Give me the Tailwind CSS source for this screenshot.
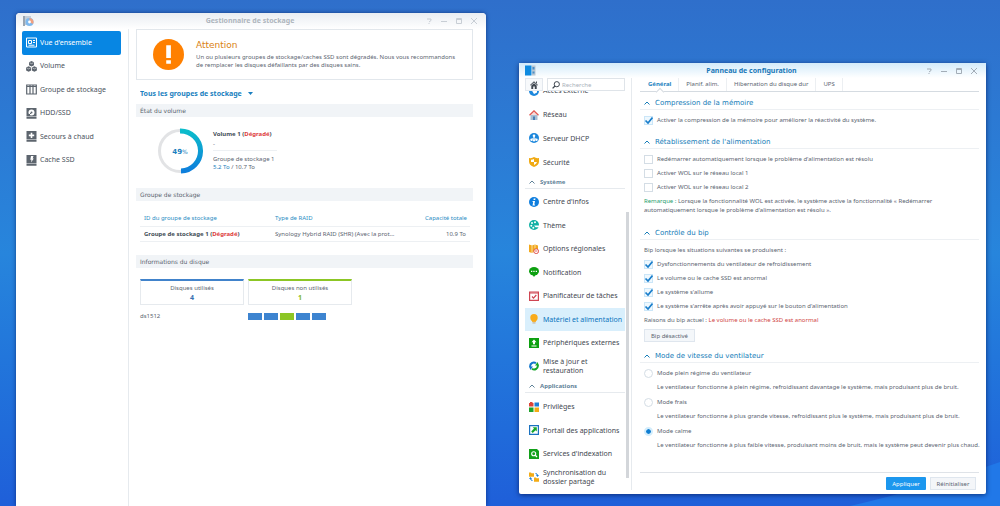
<!DOCTYPE html>
<html lang="fr">
<head>
    <meta charset="UTF-8">
    <meta name="viewport" content="width=device-width, initial-scale=1.0">
    <title>DSM</title>
    <script src="https://cdn.jsdelivr.net/npm/@tailwindcss/browser@4"></script>
</head>
<body class="font-['Noto_Sans','DejaVu_Sans',sans-serif] text-[6px] leading-[10px] text-[#5b6470] bg-linear-to-b from-[#2f6fcb] via-[#2785dc] to-[#1f5fd9]">

    <main class="relative isolate flex items-start h-screen overflow-hidden pl-4 pr-[14px] gap-[33px]">
        <!-- wallpaper swoosh -->
        <svg class="absolute inset-0 -z-10 w-full h-full" viewBox="0 0 1000 506" preserveAspectRatio="none">
            <path d="M850 506 Q920 490 1000 462 V506 Z" fill="#2178e8" />
        </svg>

        <!-- Gestionnaire de stockage -->
        <section class="mt-[13px] flex-[470] min-w-0 self-stretch bg-white rounded-t-sm shadow-[0_0_4px_rgba(0,20,80,0.6)] flex flex-col">
            <header class="h-4 shrink-0 grid grid-cols-[1fr_auto_1fr] items-center pl-[6px] pr-2 rounded-t-sm bg-linear-to-b from-[#e9edf2] to-white text-[#c8ced5]">
                <svg class="w-3 h-3" viewBox="0 0 12 12">
                    <path d="M1 1h2v10H1z" fill="#9aa5b1" /><path d="M3 1h6v9H3z" fill="#c3cdd8" />
                    <circle cx="7.500" cy="7" r="4" fill="#7db8ee" /><path d="M7.500 7V3a4 4 0 0 1 3.500 6z" fill="#f0a080" />
                    <circle cx="7.500" cy="7" r="1.400" fill="#fff" />
                </svg>
                <h1 class="text-[7px] font-bold text-[#aeb5bd]">Gestionnaire de stockage</h1>
                <div class="flex justify-end gap-[7px]">
                    <button aria-label="Aide"><svg class="w-2 h-2" viewBox="0 0 8 8" fill="none" stroke="currentColor"><path d="M2 2h4v1.500L4 5M4 6v1" /></svg></button>
                    <button aria-label="Réduire"><svg class="w-2 h-2" viewBox="0 0 8 8" fill="none" stroke="currentColor"><path d="M1 4.500h6" /></svg></button>
                    <button aria-label="Agrandir"><svg class="w-2 h-2" viewBox="0 0 8 8" fill="none" stroke="currentColor"><path d="M1.500 1.500h5v5h-5zM1.500 2.500h5" /></svg></button>
                    <button aria-label="Fermer"><svg class="w-2 h-2" viewBox="0 0 8 8" fill="none" stroke="currentColor"><path d="M1 1l6 6M7 1L1 7" /></svg></button>
                </div>
            </header>

            <div class="flex-1 flex min-h-0">
                <nav class="w-[113px] shrink-0 pl-[6px] pr-[7px] pt-[2px] border-r border-[#e6eaee]">
                    <div class="grid auto-rows-fr h-[141px] text-[7px] text-[#4a525c]">
                        <a href="#" class="flex items-center gap-[3px] pl-1 rounded-xs bg-[#0786e3] text-white">
                            <svg class="w-[11px] h-[11px]" viewBox="0 0 11 11" fill="none" stroke="currentColor"><path d="M.5 1h10v9H.5z" /><path d="M2.500 3.500h3v3h-3zM7 3.500h2M7 5.500h2M2.500 8.200h6" /></svg>
                            Vue d'ensemble
                        </a>
                        <a href="#" class="flex items-center gap-[3px] pl-1">
                            <svg class="w-[11px] h-[11px] text-[#5d656e]" viewBox="0 0 11 11" fill="currentColor"><path d="M5.500 0l2.500 1.300v3L5.500 5.500 3 4.300v-3zM2.600 5.200l2.500 1.300v3L2.600 10.800.1 9.500v-3zM8.400 5.200l2.500 1.300v3l-2.500 1.300-2.500-1.300v-3z" /><path d="M3.500 1.700l2 1 2-1M.7 6.900l1.900 1 2-1M6.500 6.900l1.900 1 2-1" stroke="#fff" stroke-width=".5" fill="none" /></svg>
                            Volume
                        </a>
                        <a href="#" class="flex items-center gap-[3px] pl-1">
                            <svg class="w-[11px] h-[11px] text-[#5d656e]" viewBox="0 0 11 11" fill="none" stroke="currentColor"><path d="M.7 1h9.600v9H.7zM4 1v9M7 1v9" stroke-width="1.200" /><path d="M1 2.500h9" /></svg>
                            Groupe de stockage
                        </a>
                        <a href="#" class="flex items-center gap-[3px] pl-1">
                            <svg class="w-[11px] h-[11px] text-[#5d656e]" viewBox="0 0 11 11"><path d="M.5 0h10v8.500H.5zM.5 9h10v1.700H.5z" fill="currentColor" /><circle cx="5.500" cy="4.400" r="3" fill="#fff" /><path d="M5.500 4.500L3 7" stroke="currentColor" /><circle cx="5.500" cy="4.400" r="1" fill="currentColor" /></svg>
                            HDD/SSD
                        </a>
                        <a href="#" class="flex items-center gap-[3px] pl-1">
                            <svg class="w-[11px] h-[11px] text-[#5d656e]" viewBox="0 0 11 11"><path d="M.5 0h10v8.500H.5zM.5 9h10v1.700H.5z" fill="currentColor" /><path d="M5.500 1.700v5.400M2.800 4.400h5.400" stroke="#fff" stroke-width="1.600" /></svg>
                            Secours à chaud
                        </a>
                        <a href="#" class="flex items-center gap-[3px] pl-1">
                            <svg class="w-[11px] h-[11px] text-[#5d656e]" viewBox="0 0 11 11"><path d="M.5 0h10v8.500H.5zM.5 9h10v1.700H.5z" fill="currentColor" /><path d="M5 1h2.500L6.700 3.500h1.100L5 7.500l.5-2.800H4.300z" fill="#fff" /></svg>
                            Cache SSD
                        </a>
                    </div>
                </nav>

                <div class="flex-1 min-w-0 pl-[7px] pr-[13px]">
                    <div class="h-[51px] flex items-center border border-[#e2e7ec] pl-4">
                        <svg class="w-[31px] h-[31px] shrink-0" viewBox="0 0 30 30"><circle cx="15" cy="15" r="15" fill="#ff8000" /><path d="M12.800 6h4.500v12.500h-4.500zM12.800 20.500h4.500v3.500h-4.500z" fill="#fff" /></svg>
                        <div class="pl-3 pb-1">
                            <h2 class="font-['DejaVu_Sans',sans-serif] text-[9px] leading-4 text-[#d98213]">Attention</h2>
                            <p class="leading-[8px]">Un ou plusieurs groupes de stockage/caches SSD sont dégradés. Nous vous recommandons<br>de remplacer les disques défaillants par des disques sains.</p>
                        </div>
                    </div>

                    <div class="h-6 pt-[3px] pl-1 flex items-center gap-[6px] text-[#1a7fc0]">
                        <select aria-label="Groupe de stockage" class="appearance-none text-[7px] font-bold leading-[10px]">
                            <option>Tous les groupes de stockage</option>
                        </select>
                        <svg class="w-[5px] h-[3px]" viewBox="0 0 5 3" fill="currentColor"><path d="M0 0h5L2.500 3z" /></svg>
                    </div>

                    <h3 class="h-[13px] pl-1 flex items-center bg-[#f1f4f7] font-['DejaVu_Sans',sans-serif]">État du volume</h3>
                    <div class="h-[71px] pl-[21px] flex items-center gap-[10px] pb-1">
                        <svg class="w-[46px] h-[46px]" viewBox="0 0 46 46" fill="none">
                            <defs><linearGradient id="arc" x1="0" y1="0" x2="0" y2="1"><stop stop-color="#0cbccb" /><stop offset="1" stop-color="#0e7fdc" /></linearGradient></defs>
                            <circle cx="23" cy="23" r="20.500" stroke="#e2e3e5" stroke-width="3" />
                            <path d="M23 3a20 20 0 0 1 1 40" stroke="url(#arc)" stroke-width="5" />
                            <text x="23" y="26" text-anchor="middle" class="font-['DejaVu_Sans',sans-serif]" font-size="7" font-weight="bold" fill="#1a7fc0">49<tspan font-size="6" font-weight="normal">%</tspan></text>
                        </svg>
                        <div class="w-[64px] whitespace-nowrap leading-[8px]">
                            <p class="pb-[2px] font-bold text-[#414b55]">Volume 1 (<span class="text-[#dd3c3c]">Dégradé</span>)</p>
                            <p class="pb-[2px] mb-1 border-b border-[#edf0f3]">-</p>
                            <p>Groupe de stockage 1</p>
                            <p><span class="text-[#1a7fc0]">5.2 To</span> / 10.7 To</p>
                        </div>
                    </div>

                    <h3 class="h-[13px] pl-1 flex items-center bg-[#f1f4f7] font-['DejaVu_Sans',sans-serif]">Groupe de stockage</h3>
                    <div class="h-[54px] pt-[10px] pl-1 pr-[3px]">
                        <table class="w-full">
                            <thead>
                                <tr class="h-[15px] text-[#2a8cc4] border-b border-[#edf0f3]">
                                    <th class="w-[131px] pl-1 text-left font-normal">ID du groupe de stockage</th>
                                    <th class="pl-1 text-left font-normal">Type de RAID</th>
                                    <th class="pr-[3px] text-right font-normal">Capacité totale</th>
                                </tr>
                            </thead>
                            <tbody>
                                <tr class="h-[15px] border-b border-[#edf0f3]">
                                    <td class="pl-1 font-bold text-[#414b55]">Groupe de stockage 1 (<span class="text-[#dd3c3c]">Dégradé</span>)</td>
                                    <td class="pl-1">Synology Hybrid RAID (SHR) (Avec la prot...</td>
                                    <td class="pr-[4px] text-right">10.9 To</td>
                                </tr>
                            </tbody>
                        </table>
                    </div>

                    <h3 class="h-[13px] pl-1 flex items-center bg-[#f1f4f7] font-['DejaVu_Sans',sans-serif]">Informations du disque</h3>
                    <div class="pt-[11px] pl-1 grid grid-cols-[104px_104px] gap-x-1 gap-y-[6px]">
                        <div class="h-[26px] pt-[2px] border border-[#e6eaee] border-t-2 border-t-[#4183cb] text-center">
                            <p>Disques utilisés</p>
                            <p class="text-[7px] font-bold leading-[9px] text-[#3a70b0]">4</p>
                        </div>
                        <div class="h-[26px] pt-[2px] border border-[#e6eaee] border-t-2 border-t-[#8cc625] text-center">
                            <p>Disques non utilisés</p>
                            <p class="text-[7px] font-bold leading-[9px] text-[#86b92c]">1</p>
                        </div>
                        <p>ds1512</p>
                        <div class="flex items-center gap-[2px]">
                            <span class="w-[14px] h-[7px] bg-[#3d84d0]"></span>
                            <span class="w-[14px] h-[7px] bg-[#3d84d0]"></span>
                            <span class="w-[14px] h-[7px] bg-[#8cc625]"></span>
                            <span class="w-[14px] h-[7px] bg-[#3d84d0]"></span>
                            <span class="w-[14px] h-[7px] bg-[#3d84d0]"></span>
                        </div>
                    </div>
                </div>
            </div>
        </section>

        <!-- Panneau de configuration -->
        <section class="mt-[63px] flex-[467] min-w-0 bg-white rounded-xs shadow-[0_1px_5px_rgba(0,20,80,0.7)]">
            <header class="h-[15px] grid grid-cols-[1fr_auto_1fr] items-center pl-[6px] pr-2 bg-linear-to-b from-[#d3ebfa] to-white text-[#a3adb7]">
                <svg class="w-[11px] h-[11px]" viewBox="0 0 11 11"><path d="M0 .5h6.500v10H0z" fill="#0f8be0" /><path d="M7 .5h3.500v10H7z" fill="#b9c6d2" /><path d="M7.500 2h2v2.500h-2zM7.500 6.500h2v2h-2z" fill="#4a8fc8" /></svg>
                <h1 class="text-[7px] font-bold text-[#1a78b8]">Panneau de configuration</h1>
                <div class="flex justify-end gap-[7px]">
                    <button aria-label="Aide"><svg class="w-2 h-2" viewBox="0 0 8 8" fill="none" stroke="currentColor"><path d="M2 2h4v1.500L4 5M4 6v1" /></svg></button>
                    <button aria-label="Réduire"><svg class="w-2 h-2" viewBox="0 0 8 8" fill="none" stroke="currentColor"><path d="M1 4.500h6" /></svg></button>
                    <button aria-label="Agrandir"><svg class="w-2 h-2" viewBox="0 0 8 8" fill="none" stroke="currentColor"><path d="M1.500 1.500h5v5h-5zM1.500 2.500h5" /></svg></button>
                    <button aria-label="Fermer"><svg class="w-2 h-2" viewBox="0 0 8 8" fill="none" stroke="currentColor"><path d="M1 1l6 6M7 1L1 7" /></svg></button>
                </div>
            </header>

            <div class="flex pb-1">
                <div class="w-[113px] shrink-0 border-r border-[#e6eaee]">
                    <div class="flex gap-1 pl-[6px] pr-[6px]">
                        <button aria-label="Accueil" class="w-[18px] h-[13px] flex items-center justify-center border border-[#e3e8ee] bg-[#f7f9fb]">
                            <svg class="w-2 h-2" viewBox="0 0 8 8" fill="#3f4750"><path d="M4 .3L8 4l-.6.6L4 1.600.6 4.600 0 4zM1.300 4.600L4 2.300l2.700 2.300V8H4.800V5.500H3.200V8H1.300zM6 .6h1v2L6 1.700z" /></svg>
                        </button>
                        <label class="flex-1 min-w-0 h-[13px] flex items-center gap-[2px] pl-1 border border-[#dfe4e9]">
                            <svg class="w-2 h-2 shrink-0" viewBox="0 0 8 8" fill="none" stroke="#3f4750"><circle cx="4.800" cy="3.200" r="2.600" /><path d="M3 5L.6 7.400" stroke-width="1.300" /></svg>
                            <input type="text" aria-label="Recherche" placeholder="Recherche" class="min-w-0 w-full outline-none placeholder:text-[#a9b1ba]">
                        </label>
                    </div>

                    <div class="flex justify-between h-[399px] pl-[6px] pr-[2px] overflow-hidden">
                        <nav class="w-[100px] -mt-3 text-[7px] leading-[9px] text-[#3f4750]">
                            <div class="grid auto-rows-fr h-[95px]">
                                <a href="#" class="flex items-center gap-1 pl-1 whitespace-nowrap">
                                    <svg class="w-[10px] h-[10px] shrink-0" viewBox="0 0 10 10"><circle cx="5" cy="5" r="5" fill="#1c87dc" /><path d="M2 3l3 2 3-2v3.500L5 8z" fill="#fff" /></svg>
                                    Accès externe
                                </a>
                                <a href="#" class="flex items-center gap-1 pl-1 whitespace-nowrap">
                                    <svg class="w-[10px] h-[10px] shrink-0" viewBox="0 0 10 10"><path d="M1.500 5h7v5h-7z" fill="#a9bfd4" /><path d="M5 1l4 4H1z" fill="#f6dcdc" /><path d="M.5 5.200L5 .8l4.500 4.400" fill="none" stroke="#e2554f" stroke-width="1.200" /><path d="M4 6.500h2V10H4z" fill="#4c7fb5" /></svg>
                                    Réseau
                                </a>
                                <a href="#" class="flex items-center gap-1 pl-1 whitespace-nowrap">
                                    <svg class="w-[10px] h-[10px] shrink-0" viewBox="0 0 10 10"><circle cx="5" cy="5" r="5" fill="#1c87dc" /><path d="M5 3v2M5 4.800L2.600 6.600M5 4.800l2.400 1.800" stroke="#fff" /><circle cx="5" cy="2.700" r="1.300" fill="#fff" /><circle cx="2.500" cy="6.700" r="1.200" fill="#fff" /><circle cx="5" cy="7.200" r="1.200" fill="#fff" /><circle cx="7.500" cy="6.700" r="1.200" fill="#fff" /></svg>
                                    Serveur DHCP
                                </a>
                                <a href="#" class="flex items-center gap-1 pl-1 whitespace-nowrap">
                                    <svg class="w-[10px] h-[10px] shrink-0" viewBox="0 0 10 10"><path d="M0 1q3 .5 5-1 2 1.500 5 1v3.500Q10 8 5 10 0 8 0 4.500z" fill="#f0aa14" /><path d="M5 2v3H2V2.700Q4 2.700 5 2zM5 5h3Q7.500 7 5 8z" fill="#fff" /></svg>
                                    Sécurité
                                </a>
                            </div>
                            <h2 class="h-[15px] pt-[2px] mb-px flex items-center gap-[5px] pl-1 border-b border-[#e6eaee] text-[6px] font-bold text-[#5f8298]">
                                <svg class="w-[6px] h-[4px]" viewBox="0 0 6 4" fill="none" stroke="currentColor"><path d="M.5 3.500L3 1l2.500 2.500" /></svg>
                                Système
                            </h2>
                            <div class="grid auto-rows-fr h-[188px]">
                                <a href="#" class="flex items-center gap-1 pl-1 whitespace-nowrap">
                                    <svg class="w-[10px] h-[10px] shrink-0" viewBox="0 0 10 10"><circle cx="5" cy="5" r="5" fill="#0f7ede" /><path d="M4.700 1.500h1.800L6.200 3H4.500zM3.700 4H6l-.7 3.500h.8l-.2 1H3.500L4.200 5h-.7z" fill="#fff" /></svg>
                                    Centre d'infos
                                </a>
                                <a href="#" class="flex items-center gap-1 pl-1 whitespace-nowrap">
                                    <svg class="w-[10px] h-[10px] shrink-0" viewBox="0 0 10 10"><circle cx="5" cy="5" r="5" fill="#10b0a4" /><g fill="#fff"><circle cx="3" cy="3" r="1" /><circle cx="6" cy="2.200" r="1" /><circle cx="2.300" cy="5.800" r="1" /><circle cx="4.300" cy="7.800" r="1" /><path d="M5 5.500h5v1.700H6.500z" /></g></svg>
                                    Thème
                                </a>
                                <a href="#" class="flex items-center gap-1 pl-1 whitespace-nowrap">
                                    <svg class="w-[10px] h-[10px] shrink-0" viewBox="0 0 10 10"><path d="M0 .5l3 1 3-1 3 1v7L6 7.500l-3 1.500-3-1z" fill="#f2a91c" /><path d="M3 1.500V9M6 .5v4" stroke="#fff" stroke-width=".6" /><circle cx="7.200" cy="7.200" r="2.400" fill="#fff" stroke="#dd4a44" stroke-width=".9" /><path d="M6 7h2.400" stroke="#dd4a44" stroke-width=".8" /></svg>
                                    Options régionales
                                </a>
                                <a href="#" class="flex items-center gap-1 pl-1 whitespace-nowrap">
                                    <svg class="w-[10px] h-[10px] shrink-0" viewBox="0 0 10 10"><ellipse cx="5" cy="4.300" rx="5" ry="4.200" fill="#0da010" /><path d="M3 7h4l-2 3z" fill="#0da010" /><path d="M2 3.800h1.300v1.300H2zM4.300 3.800h1.300v1.300H4.300zM6.700 3.800H8v1.300H6.700z" fill="#fff" /></svg>
                                    Notification
                                </a>
                                <a href="#" class="flex items-center gap-1 pl-1 whitespace-nowrap">
                                    <svg class="w-[10px] h-[10px] shrink-0" viewBox="0 0 10 10" fill="none"><path d="M.6 1h8.800v8.400H.6z" stroke="#cf4552" stroke-width="1.200" /><path d="M.5 2h9" stroke="#cf4552" /><path d="M3 5.500l1.500 1.700L7.300 4" stroke="#cf4552" stroke-width="1.200" /></svg>
                                    Planificateur de tâches
                                </a>
                                <a href="#" class="flex items-center gap-1 pl-1 whitespace-nowrap bg-[#d9effc] text-[#0a74bd]">
                                    <svg class="w-[10px] h-[10px] shrink-0" viewBox="0 0 10 10"><circle cx="5" cy="3.700" r="3.700" fill="#f9ab1b" /><path d="M3 6h4v1.800H3z" fill="#f9ab1b" /><path d="M3.500 8h3v1.700h-3z" fill="#c9c3b4" /></svg>
                                    Matériel et alimentation
                                </a>
                                <a href="#" class="flex items-center gap-1 pl-1 whitespace-nowrap">
                                    <svg class="w-[10px] h-[10px] shrink-0" viewBox="0 0 10 10"><path d="M0 0h10v10H0z" fill="#0da010" /><path d="M5 1.500l2.500 2.800H6v2H4v-2H2.500zM2.500 7.500h5v1h-5z" fill="#fff" /></svg>
                                    Périphériques externes
                                </a>
                                <a href="#" class="flex items-center gap-1 pl-1">
                                    <svg class="w-[10px] h-[10px] shrink-0" viewBox="0 0 10 10" fill="none" stroke-width="2"><path d="M1.300 6A3.600 3.600 0 0 1 7 2.300" stroke="#1478cc" /><path d="M8.700 4A3.600 3.600 0 0 1 3 7.700" stroke="#14a52a" /><path d="M6 4.500h4L8.500 1z" fill="#14a52a" /><path d="M0 5.500h4L1.500 9z" fill="#1478cc" /></svg>
                                    <span>Mise à jour et<br>restauration</span>
                                </a>
                            </div>
                            <h2 class="h-[15px] pt-[2px] mb-[2px] flex items-center gap-[5px] pl-1 border-b border-[#e6eaee] text-[6px] font-bold text-[#5f8298]">
                                <svg class="w-[6px] h-[4px]" viewBox="0 0 6 4" fill="none" stroke="currentColor"><path d="M.5 3.500L3 1l2.500 2.500" /></svg>
                                Applications
                            </h2>
                            <div class="grid auto-rows-fr h-[94px]">
                                <a href="#" class="flex items-center gap-1 pl-1 whitespace-nowrap">
                                    <svg class="w-[10px] h-[10px] shrink-0" viewBox="0 0 10 10"><path d="M0 1h4.500v3.500H0z" fill="#dd4438" /><path d="M1 0h2.500v1H1z" fill="#dd4438" /><path d="M5.500 .5H10v4H5.500z" fill="#1f7fd6" /><path d="M0 5.500h4.500V10H0z" fill="#1ea32b" /><path d="M5.500 5.500H10V10H5.500z" fill="#f3ac16" /></svg>
                                    Privilèges
                                </a>
                                <a href="#" class="flex items-center gap-1 pl-1 whitespace-nowrap">
                                    <svg class="w-[10px] h-[10px] shrink-0" viewBox="0 0 10 10"><path d="M.6 .6h8.800v8.800H.6z" fill="#fff" stroke="#1b72c0" stroke-width="1.200" /><path d="M3.700 2.300h4.100v4.100L6.600 5.200 3.700 8 2.200 6.500 5 3.600z" fill="#14a52a" /></svg>
                                    Portail des applications
                                </a>
                                <a href="#" class="flex items-center gap-1 pl-1 whitespace-nowrap">
                                    <svg class="w-[10px] h-[10px] shrink-0" viewBox="0 0 10 10"><path d="M0 0h8l2 2v8H0z" fill="#12a01a" /><circle cx="4.700" cy="4.700" r="2" fill="none" stroke="#fff" stroke-width="1.100" /><path d="M6 6l2 2" stroke="#fff" stroke-width="1.300" /></svg>
                                    Services d'indexation
                                </a>
                                <a href="#" class="flex items-center gap-1 pl-1">
                                    <svg class="w-[10px] h-[10px] shrink-0" viewBox="0 0 10 10" fill="none"><path d="M0 .5h2l.5.7H5v3.500H0zM5 5.500h2l.5.700H10V9.700H5z" fill="#f3ac16" /><path d="M6.500 1.500q2 0 2 2M3.500 8.500q-2 0-2-2" stroke="#1f7fd6" /><path d="M7 3h3L8.500 5zM0 7h3L1.500 5z" fill="#1f7fd6" /></svg>
                                    <span>Synchronisation du<br>dossier partagé</span>
                                </a>
                            </div>
                        </nav>
                        <div class="w-[3px] h-[266px] mt-[121px] bg-[#d3d6da]"></div>
                    </div>
                </div>

                <div class="flex-1 min-w-0 flex flex-col pl-2 pr-[7px]">
                    <div class="flex h-[14px] pl-px border-b border-[#d5dbe1] leading-[13px]">
                        <button class="relative px-[7px] font-bold text-[#1a7fc0]">Général
                            <span class="absolute left-1/2 -bottom-[4px] -ml-[3px] w-[6px] h-[6px] rotate-45 bg-white border-t border-l border-[#d5dbe1]"></span>
                        </button>
                        <button class="px-[7px] border-l border-[#eceff2]">Planif. alim.</button>
                        <button class="px-[7px] border-l border-[#eceff2]">Hibernation du disque dur</button>
                        <button class="px-[7px] border-x border-[#eceff2]">UPS</button>
                    </div>

                    <form class="flex-1 flex flex-col">
                        <h2 class="mt-[5px] h-[13px] flex items-center gap-[5px] pl-1 border-b border-[#edf0f3] font-['DejaVu_Sans',sans-serif] text-[7px] text-[#147cb8]">
                            <svg class="w-[6px] h-[4px]" viewBox="0 0 6 4" fill="none" stroke="currentColor"><path d="M.5 3.500L3 1l2.500 2.500" /></svg>
                            Compression de la mémoire
                        </h2>
                        <div class="pt-[3px] pl-1">
                            <label class="h-[14px] flex items-center gap-1">
                                <span class="relative w-[9px] h-[9px]"><input type="checkbox" checked class="peer appearance-none block w-full h-full border border-[#d4dde5] checked:border-[#cbe6f8] checked:bg-[#eef8fe]"><svg class="hidden peer-checked:block absolute inset-0 w-full h-full" viewBox="0 0 9 9" fill="none" stroke="#1a7ecb" stroke-width="1.700"><path d="M1.500 4.500L4 7l4.500-5.500" /></svg></span>
                                Activer la compression de la mémoire pour améliorer la réactivité du système.
                            </label>
                        </div>

                        <h2 class="mt-[9px] h-[13px] flex items-center gap-[5px] pl-1 border-b border-[#edf0f3] font-['DejaVu_Sans',sans-serif] text-[7px] text-[#147cb8]">
                            <svg class="w-[6px] h-[4px]" viewBox="0 0 6 4" fill="none" stroke="currentColor"><path d="M.5 3.500L3 1l2.500 2.500" /></svg>
                            Rétablissement de l'alimentation
                        </h2>
                        <div class="pt-[3px] pl-1">
                            <label class="h-[14px] flex items-center gap-1">
                                <input type="checkbox" class="appearance-none w-[9px] h-[9px] border border-[#d4dde5]">
                                Redémarrer automatiquement lorsque le problème d'alimentation est résolu
                            </label>
                            <label class="h-[14px] flex items-center gap-1">
                                <input type="checkbox" class="appearance-none w-[9px] h-[9px] border border-[#d4dde5]">
                                Activer WOL sur le réseau local 1
                            </label>
                            <label class="h-[14px] flex items-center gap-1">
                                <input type="checkbox" class="appearance-none w-[9px] h-[9px] border border-[#d4dde5]">
                                Activer WOL sur le réseau local 2
                            </label>
                        </div>
                        <p class="pt-[3px] pl-1 leading-[9px]"><span class="text-[#1f9e6e]">Remarque :</span> Lorsque la fonctionnalité WOL est activée, le système active la fonctionnalité « Redémarrer<br>automatiquement lorsque le problème d'alimentation est résolu ».</p>

                        <h2 class="mt-[12px] h-[13px] flex items-center gap-[5px] pl-1 border-b border-[#edf0f3] font-['DejaVu_Sans',sans-serif] text-[7px] text-[#147cb8]">
                            <svg class="w-[6px] h-[4px]" viewBox="0 0 6 4" fill="none" stroke="currentColor"><path d="M.5 3.500L3 1l2.500 2.500" /></svg>
                            Contrôle du bip
                        </h2>
                        <div class="pt-[3px] pl-1">
                            <p class="leading-[14px]">Bip lorsque les situations suivantes se produisent :</p>
                            <label class="h-[14px] flex items-center gap-1">
                                <span class="relative w-[9px] h-[9px]"><input type="checkbox" checked class="peer appearance-none block w-full h-full border border-[#d4dde5] checked:border-[#cbe6f8] checked:bg-[#eef8fe]"><svg class="hidden peer-checked:block absolute inset-0 w-full h-full" viewBox="0 0 9 9" fill="none" stroke="#1a7ecb" stroke-width="1.700"><path d="M1.500 4.500L4 7l4.500-5.500" /></svg></span>
                                Dysfonctionnements du ventilateur de refroidissement
                            </label>
                            <label class="h-[14px] flex items-center gap-1">
                                <span class="relative w-[9px] h-[9px]"><input type="checkbox" checked class="peer appearance-none block w-full h-full border border-[#d4dde5] checked:border-[#cbe6f8] checked:bg-[#eef8fe]"><svg class="hidden peer-checked:block absolute inset-0 w-full h-full" viewBox="0 0 9 9" fill="none" stroke="#1a7ecb" stroke-width="1.700"><path d="M1.500 4.500L4 7l4.500-5.500" /></svg></span>
                                Le volume ou le cache SSD est anormal
                            </label>
                            <label class="h-[14px] flex items-center gap-1">
                                <span class="relative w-[9px] h-[9px]"><input type="checkbox" checked class="peer appearance-none block w-full h-full border border-[#d4dde5] checked:border-[#cbe6f8] checked:bg-[#eef8fe]"><svg class="hidden peer-checked:block absolute inset-0 w-full h-full" viewBox="0 0 9 9" fill="none" stroke="#1a7ecb" stroke-width="1.700"><path d="M1.500 4.500L4 7l4.500-5.500" /></svg></span>
                                Le système s'allume
                            </label>
                            <label class="h-[14px] flex items-center gap-1">
                                <span class="relative w-[9px] h-[9px]"><input type="checkbox" checked class="peer appearance-none block w-full h-full border border-[#d4dde5] checked:border-[#cbe6f8] checked:bg-[#eef8fe]"><svg class="hidden peer-checked:block absolute inset-0 w-full h-full" viewBox="0 0 9 9" fill="none" stroke="#1a7ecb" stroke-width="1.700"><path d="M1.500 4.500L4 7l4.500-5.500" /></svg></span>
                                Le système s'arrête après avoir appuyé sur le bouton d'alimentation
                            </label>
                            <p class="leading-[14px]">Raisons du bip actuel : <span class="text-[#d04545]">Le volume ou le cache SSD est anormal</span></p>
                            <button type="button" class="mt-[2px] w-[51px] h-[13px] block border border-[#dfe6ee] bg-[#f4f7fa]">Bip désactivé</button>
                        </div>

                        <h2 class="mt-2 h-[13px] flex items-center gap-[5px] pl-1 border-b border-[#edf0f3] font-['DejaVu_Sans',sans-serif] text-[7px] text-[#147cb8]">
                            <svg class="w-[6px] h-[4px]" viewBox="0 0 6 4" fill="none" stroke="currentColor"><path d="M.5 3.500L3 1l2.500 2.500" /></svg>
                            Mode de vitesse du ventilateur
                        </h2>
                        <div class="pt-[3px] pl-1 whitespace-nowrap">
                            <label class="h-[14px] flex items-center gap-1">
                                <input type="radio" name="fan" class="appearance-none w-[9px] h-[9px] rounded-full border border-[#d4dde5]">
                                Mode plein régime du ventilateur
                            </label>
                            <p class="pl-[13px] leading-[15px]">Le ventilateur fonctionne à plein régime, refroidissant davantage le système, mais produisant plus de bruit.</p>
                            <label class="h-[14px] flex items-center gap-1">
                                <input type="radio" name="fan" class="appearance-none w-[9px] h-[9px] rounded-full border border-[#d4dde5]">
                                Mode frais
                            </label>
                            <p class="pl-[13px] leading-[15px]">Le ventilateur fonctionne à plus grande vitesse, refroidissant plus le système, mais produisant plus de bruit.</p>
                            <label class="h-[14px] flex items-center gap-1">
                                <input type="radio" name="fan" checked class="appearance-none w-[9px] h-[9px] rounded-full border-2 border-[#d3edfc] bg-[#0f7ed2] bg-clip-padding">
                                Mode calme
                            </label>
                            <p class="pl-[13px] leading-[15px]">Le ventilateur fonctionne à plus faible vitesse, produisant moins de bruit, mais le système peut devenir plus chaud.</p>
                        </div>

                        <div class="mt-auto pt-1 pr-[3px] flex justify-end gap-1 border-t border-[#dfe3e8]">
                            <button type="submit" class="w-10 h-[13px] rounded-[1px] bg-[#1c97ee] text-white">Appliquer</button>
                            <button type="reset" class="w-[46px] h-[13px] border border-[#dfe6ee] bg-[#f4f6f9]">Réinitialiser</button>
                        </div>
                    </form>
                </div>
            </div>
        </section>
    </main>

</body>
</html>
